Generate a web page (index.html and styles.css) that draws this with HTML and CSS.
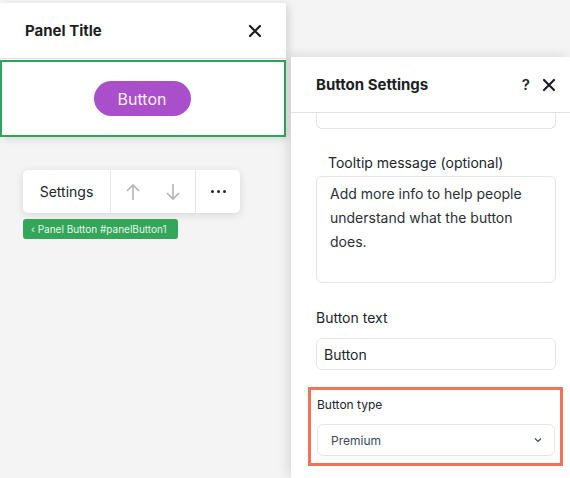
FILE: index.html
```html
<!DOCTYPE html>
<html lang="en">
<head>
    <meta charset="UTF-8">
    <meta name="viewport" content="width=device-width, initial-scale=1.0">
    <title>Button Settings</title>
    <link rel="stylesheet" href="styles.css">
</head>
<body>
    <div class="stage">
        <!-- Left side: the panel preview and the element toolbar -->
        <div class="left-col">
            <div class="panel">
                <div class="panel-header">
                    <span class="panel-title">Panel Title</span>
                    <svg class="icon-close" width="14" height="14" viewBox="0 0 14 14">
                        <path d="M2 2 L12 12 M12 2 L2 12" stroke="#1b1f24" stroke-width="2.2" stroke-linecap="round"/>
                    </svg>
                </div>
                <div class="panel-body">
                    <span class="pill-button">Button</span>
                </div>
            </div>

            <div class="toolbar">
                <div class="tb-section tb-settings">Settings</div>
                <div class="tb-section tb-arrows">
                    <svg width="16" height="18" viewBox="0 0 16 18">
                        <path d="M8 17 V2 M2 8 L8 2 L14 8" stroke="#b5b5b5" stroke-width="1.6" fill="none"/>
                    </svg>
                    <svg width="16" height="18" viewBox="0 0 16 18">
                        <path d="M8 1 V16 M2 10 L8 16 L14 10" stroke="#b5b5b5" stroke-width="1.6" fill="none"/>
                    </svg>
                </div>
                <div class="tb-section tb-more">
                    <span class="dot"></span><span class="dot"></span><span class="dot"></span>
                </div>
            </div>
            <div class="tag">&lsaquo; Panel Button #panelButton1</div>
        </div>

        <!-- Right side: settings panel -->
        <div class="right-col">
            <div class="settings">
                <div class="settings-header">
                    <span class="settings-title">Button Settings</span>
                    <span class="help">?</span>
                    <svg class="icon-close" width="14" height="14" viewBox="0 0 14 14">
                        <path d="M2 2 L12 12 M12 2 L2 12" stroke="#1b1f24" stroke-width="2.2" stroke-linecap="round"/>
                    </svg>
                </div>
                <div class="settings-body">
                    <div class="field-cut"></div>

                    <label class="field-label indented">Tooltip message (optional)</label>
                    <div class="textarea">Add more info to help people understand what the button does.</div>

                    <label class="field-label spaced">Button text</label>
                    <div class="input">Button</div>

                    <div class="highlight">
                        <label class="field-label small">Button type</label>
                        <div class="select">
                            <span>Premium</span>
                            <svg width="8" height="6" viewBox="0 0 8 6">
                                <path d="M1 1.5 L4 4.5 L7 1.5" stroke="#3b4a57" stroke-width="1.2" fill="none"/>
                            </svg>
                        </div>
                    </div>
                </div>
            </div>
        </div>
    </div>
</body>
</html>
```

FILE: styles.css
```css
* {
    box-sizing: border-box;
}
body {
    margin: 0;
    font-family: Inter, "Open Sans", Arial, sans-serif;
    background-color: #f4f4f4;
    color: #20262d;
    width: 570px;
    height: 478px;
    overflow: hidden;
}
.stage {
    display: flex;
    height: 478px;
}

/* left column */
.left-col {
    width: 291px;
    padding-top: 3px;
}
.panel {
    width: 286px;
    background-color: #fff;
    box-shadow: 3px 2px 8px rgba(0, 0, 0, 0.12);
}
.panel-header {
    height: 56px;
    display: flex;
    align-items: center;
    justify-content: space-between;
    padding: 0 24px 0 25px;
    border-bottom: 1px solid #e3e3e3;
}
.panel-title {
    font-size: 15px;
    font-weight: 700;
    color: #1b1f24;
}
.panel-body {
    margin-top: 1px;
    height: 77px;
    border: 2px solid #2fa55b;
    display: flex;
    align-items: center;
    justify-content: center;
}
.pill-button {
    background-color: #a94fc9;
    color: #fbeefe;
    font-size: 16px;
    width: 97px;
    height: 35px;
    border-radius: 18px;
    display: flex;
    align-items: center;
    justify-content: center;
    margin-left: -2px;
}

.toolbar {
    margin: 33px 0 0 23px;
    width: 217px;
    height: 43px;
    background-color: #fff;
    border-radius: 5px;
    box-shadow: 0 2px 8px rgba(0, 0, 0, 0.12);
    display: flex;
}
.tb-section {
    display: flex;
    align-items: center;
    justify-content: center;
}
.tb-settings {
    width: 88px;
    font-size: 14px;
    color: #20262d;
    border-right: 1px solid #e6e6e6;
}
.tb-arrows {
    width: 85px;
    gap: 24px;
    border-right: 1px solid #e6e6e6;
}
.tb-more {
    flex: 1;
    gap: 3px;
}
.dot {
    width: 3px;
    height: 3px;
    border-radius: 50%;
    background-color: #20262d;
}
.tag {
    margin: 6px 0 0 23px;
    width: 155px;
    height: 20px;
    background-color: #33a65a;
    color: #e6f5ea;
    font-size: 10px;
    border-radius: 3px;
    padding-left: 8px;
    display: flex;
    align-items: center;
}

/* right column */
.right-col {
    flex: 1;
    padding-top: 57px;
}
.settings {
    height: 100%;
    background-color: #fff;
    box-shadow: -4px -2px 10px rgba(0, 0, 0, 0.1);
}
.settings-header {
    height: 56px;
    display: flex;
    align-items: center;
    padding: 0 14px 0 25px;
    border-bottom: 1px solid #e3e3e3;
}
.settings-title {
    font-size: 15px;
    font-weight: 700;
    color: #1b1f24;
    flex: 1;
}
.help {
    font-size: 15px;
    font-weight: 600;
    margin-right: 12px;
}
.settings-body {
    padding: 0 14px 0 25px;
    overflow: hidden;
}
.field-cut {
    height: 16px;
    border: 1px solid #e2e5ea;
    border-top: none;
    border-radius: 0 0 6px 6px;
    margin-bottom: 25px;
}
.field-label {
    display: block;
    font-size: 14px;
    color: #20262d;
    margin-bottom: 5px;
}
.field-label.indented {
    padding-left: 12px;
}
.field-label.spaced {
    margin-bottom: 12px;
}
.field-label.small {
    font-size: 12px;
    margin-bottom: 12px;
}
.textarea {
    height: 107px;
    border: 1px solid #e2e5ea;
    border-radius: 6px;
    padding: 5px 20px 0 13px;
    font-size: 14px;
    line-height: 24px;
    color: #2a3036;
    margin-bottom: 26px;
}
.input {
    height: 32px;
    border: 1px solid #e2e5ea;
    border-radius: 6px;
    padding-left: 7px;
    display: flex;
    align-items: center;
    font-size: 14px;
    margin-bottom: 17px;
}
.highlight {
    margin: 0 -7px 0 -8px;
    border: 3px solid #f7705a;
    padding: 7px 5px 7px 6px;
}
.select {
    height: 32px;
    border: 1px solid #e2e5ea;
    border-radius: 6px;
    display: flex;
    align-items: center;
    justify-content: space-between;
    padding: 0 12px 0 13px;
    font-size: 12px;
    color: #3b4a57;
}
```
